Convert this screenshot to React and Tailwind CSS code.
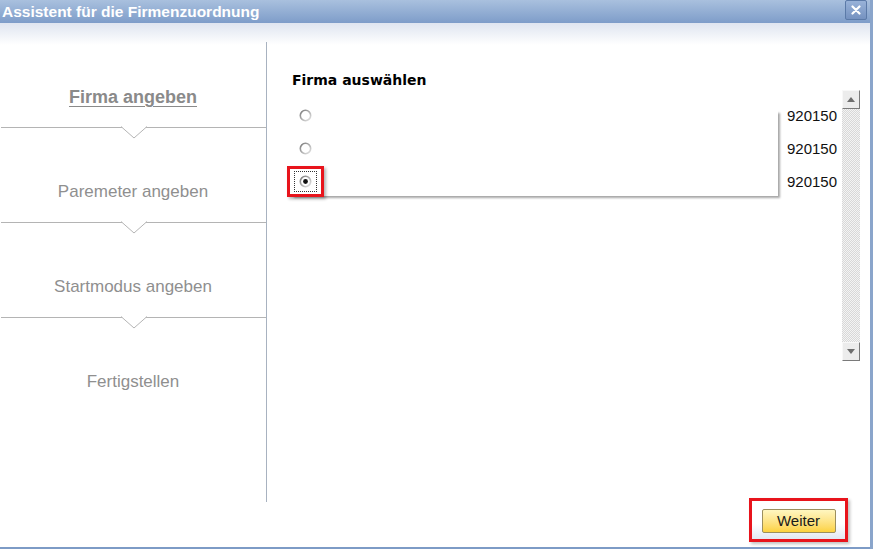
import React from 'react';

const steps = [
  { label: 'Firma angeben', active: true },
  { label: 'Paremeter angeben' },
  { label: 'Startmodus angeben' },
  { label: 'Fertigstellen' },
];

const rows = [
  { id: 1, value: '920150', checked: false },
  { id: 2, value: '920150', checked: false },
  { id: 3, value: '920150', checked: true },
];

function Notch() {
  return (
    <svg className="absolute left-[121px] top-[-1px]" width="26" height="13" viewBox="0 0 26 13">
      <polygon points="0,0.5 13,12 26,0.5" fill="#ffffff" />
      <polyline points="0,0.5 13,12 26,0.5" fill="none" stroke="#b4b4b4" strokeWidth="1" />
    </svg>
  );
}

function Radio({ checked }) {
  return (
    <svg width="13" height="13" viewBox="0 0 13 13">
      <defs>
        <linearGradient id={checked ? 'rg1' : 'rg0'} x1="0" y1="0" x2="1" y2="1">
          <stop offset="0" stopColor="#7a7a7a" />
          <stop offset="1" stopColor="#e6e6e6" />
        </linearGradient>
      </defs>
      <circle cx="6.5" cy="6.5" r="5.2" fill="#ffffff" stroke={`url(#${checked ? 'rg1' : 'rg0'})`} strokeWidth="1.6" />
      {checked && <circle cx="6.5" cy="6.5" r="2.4" fill="#111111" />}
    </svg>
  );
}

export default function App() {
  return (
    <div className="w-[873px] h-[549px] bg-white flex flex-col overflow-hidden border-r-[3px] border-[#8aa5cb] font-['Liberation_Sans',Arial,sans-serif]">
      {/* Title bar */}
      <div className="h-[23px] shrink-0 flex items-center justify-between pl-[2px] pr-[3px] bg-gradient-to-b from-[#a9c0de] to-[#7e9dc9]">
        <span className="text-white font-bold text-[15.5px] leading-none">Assistent für die Firmenzuordnung</span>
        <div className="w-[22px] h-[20px] -mt-[3px] flex items-center justify-center bg-gradient-to-b from-[#98b2d8] to-[#7592c0] border border-[#5b7aa8] rounded-[2px]">
          <svg width="10" height="10" viewBox="0 0 10 10">
            <path d="M1.5 1.5 L8.5 8.5 M8.5 1.5 L1.5 8.5" stroke="#ffffff" strokeWidth="2.2" strokeLinecap="round" />
          </svg>
        </div>
      </div>

      {/* Body */}
      <div className="flex-1 flex bg-[linear-gradient(#dfe5f0,#ffffff_22px)]">
        {/* Steps */}
        <div className="w-[267px] mt-[19px] mb-[45px] border-r border-[#a8b2c0] flex flex-col">
          {steps.map((s, i) => (
            <div
              key={s.label}
              className={`relative ${i === 0 ? 'h-[85px] pt-[45px]' : 'h-[95px] pt-[55px]'}`}
            >
              {i > 0 && (
                <>
                  <div className="absolute left-[1px] right-0 top-0 h-px bg-[#b4b4b4]" />
                  <Notch />
                </>
              )}
              <div className="text-center leading-[20px]">
                {s.active ? (
                  <span className="font-bold text-[18px] text-[#8a8a8a] underline underline-offset-[3px]">{s.label}</span>
                ) : (
                  <span className="text-[17px] text-[#8f8f8f]">{s.label}</span>
                )}
              </div>
            </div>
          ))}
        </div>

        {/* Content */}
        <div className="flex-1 flex flex-col">
          <div className="flex-1 flex pt-[48px] pl-[25px]">
            <div className="flex-1">
              <div className="text-[14px] leading-[18px] font-bold text-black font-['DejaVu_Sans',Verdana,sans-serif]">Firma auswählen</div>
              <div className="relative mt-[10px] w-[491px] ml-[-5px]">
                <div className="absolute left-[5px] right-0 top-[12px] bottom-[2px] shadow-[2px_2px_2px_rgba(0,0,0,0.35)] bg-white" />
                {rows.map((r) => (
                  <div key={r.id} className="relative h-[33px] flex items-center pl-[12px]">
                    {r.checked ? (
                      <div className="ml-[-12px] w-[37px] h-[31px] border-[3px] border-[#e8141c] bg-white flex items-center justify-center shadow-[2px_2px_3px_rgba(0,0,0,0.3)]">
                        <div className="w-[23px] h-[21px] border border-dotted border-[#333] flex items-center justify-center">
                          <Radio checked />
                        </div>
                      </div>
                    ) : (
                      <Radio checked={false} />
                    )}
                  </div>
                ))}
              </div>
            </div>
            <div className="w-[55px] pt-[28px] text-[15px] text-[#111]">
              {rows.map((r) => (
                <div key={r.id} className="h-[33px] leading-[33px]">{r.value}</div>
              ))}
            </div>
            {/* Scrollbar */}
            <div className="w-[18px] mt-[19px] h-[271px] mr-[10px] flex flex-col bg-[repeating-conic-gradient(#d8d8d8_0_25%,#f4f4f4_0_50%)] bg-[length:2px_2px]">
              <div className="h-[19px] bg-[#ececec] border border-[#f8f8f8] border-r-[#7a7a7a] border-b-[#7a7a7a] flex items-center justify-center">
                <svg width="8" height="5" viewBox="0 0 8 5"><polygon points="0,5 4,0 8,5" fill="#6e6e6e" /></svg>
              </div>
              <div className="flex-1" />
              <div className="h-[19px] bg-[#ececec] border border-[#f8f8f8] border-r-[#7a7a7a] border-b-[#7a7a7a] flex items-center justify-center">
                <svg width="8" height="5" viewBox="0 0 8 5"><polygon points="0,0 8,0 4,5" fill="#6e6e6e" /></svg>
              </div>
            </div>
          </div>
        </div>
      </div>

      {/* Footer */}
      <div className="h-[0px] relative">
        <div className="absolute right-[22px] bottom-[5px] w-[99px] h-[44px] border-[3px] border-[#e8141c] flex items-center justify-center shadow-[2px_2px_3px_rgba(0,0,0,0.25)] bg-[linear-gradient(#ffffff_60%,#e2e8f2)]">
          <button className="w-[74px] h-[24px] mt-[1px] rounded-[2px] border border-[#9c8f5e] bg-gradient-to-b from-[#fff6c0] to-[#fcd23c] text-[15px] leading-none text-[#1a1a1a]">
            Weiter
          </button>
        </div>
      </div>
      <div className="h-[2px] shrink-0 bg-[#7d9bc6]" />
    </div>
  );
}
